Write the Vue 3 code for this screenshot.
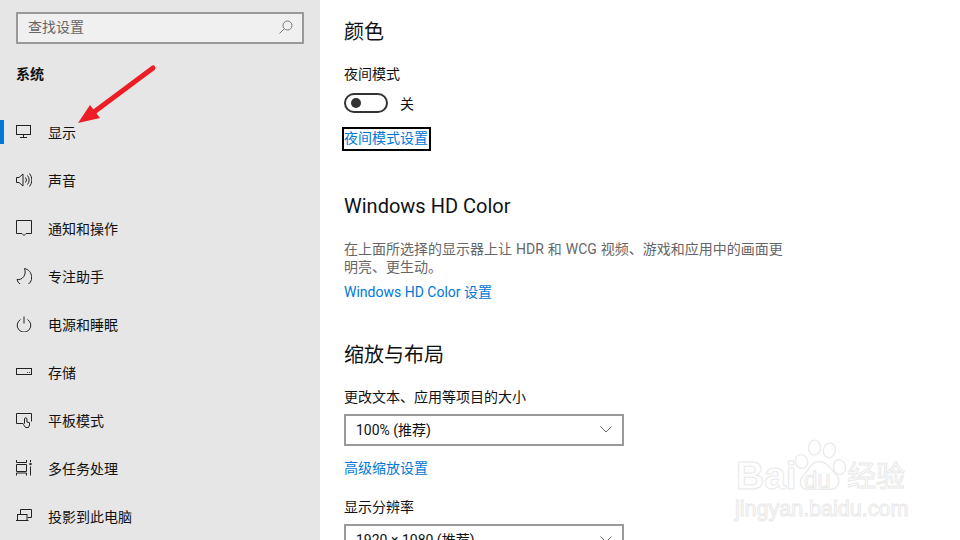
<script setup>
const items = [
  { label: '显示', icon: 'display', active: true },
  { label: '声音', icon: 'sound' },
  { label: '通知和操作', icon: 'note' },
  { label: '专注助手', icon: 'moon' },
  { label: '电源和睡眠', icon: 'power' },
  { label: '存储', icon: 'storage' },
  { label: '平板模式', icon: 'tablet' },
  { label: '多任务处理', icon: 'multi' },
  { label: '投影到此电脑', icon: 'project' }
]
</script>

<template>
  <div class="page">
    <aside class="side">
      <div class="search">
        <span class="search-text">查找设置</span>
        <svg class="search-icon" width="16" height="16" viewBox="0 0 16 16" fill="none" stroke="#777" stroke-width="1">
          <circle cx="9.5" cy="6.5" r="4.5" />
          <path d="M6.2 9.8 1.5 14.5" />
        </svg>
      </div>
      <div class="sys">系统</div>
      <nav class="nav">
        <div v-for="it in items" :key="it.label" class="item" :class="{ active: it.active }">
          <svg class="ico" width="16" height="16" viewBox="0 0 16 16" fill="none" stroke="#222" stroke-width="1">
            <template v-if="it.icon === 'display'">
              <rect x="0.5" y="1.5" width="14" height="9" />
              <path d="M7.500 10.500v3M4 13.500h7" />
            </template>
            <template v-else-if="it.icon === 'sound'">
              <path d="M0.500 5.500h2.500L7 2v12L3 10.500H0.500z" />
              <path d="M9.500 5.500a4 4 0 0 1 0 5M11.500 3.500a7 7 0 0 1 0 9M13.500 1.500a10 10 0 0 1 0 13" />
            </template>
            <template v-else-if="it.icon === 'note'">
              <path d="M0.500 0.500h15v13h-5.500L8 15.500 6 13.500H0.500z" />
            </template>
            <template v-else-if="it.icon === 'moon'">
              <path d="M8.500 0.500C13 1.500 15.500 5 15.500 8.500a7 7 0 0 1-14.500 3C6 12.500 11 7 8.500 0.500z" />
            </template>
            <template v-else-if="it.icon === 'power'">
              <path d="M8 0.500v7M4.500 3.500a6.800 6.800 0 1 0 7 0" />
            </template>
            <template v-else-if="it.icon === 'storage'">
              <rect x="0.500" y="4.500" width="15" height="6" />
              <path d="M11 8.500h.8M13 8.500h.8" />
            </template>
            <template v-else-if="it.icon === 'tablet'">
              <path d="M7 11.500H0.500v-10h15v8" />
              <path d="M8.500 11V7a1.200 1.200 0 0 1 2.400 0v3l2.600.7v2.300l-1 2.500H9.500L7.500 12.500z" />
            </template>
            <template v-else-if="it.icon === 'multi'">
              <path d="M0.500 0v2.500h10V0M0.500 15.500V13h10v2.500M0.500 4.500h10v7h-10zM14.500 6.500v9" />
              <path d="M14.500 0v2" />
              <circle cx="14.500" cy="4" r="1.200" fill="#222" stroke="none" />
            </template>
            <template v-else>
              <path d="M4.500 6V1.500h11v8h-4" />
              <rect x="1.500" y="6.500" width="9.500" height="6" />
              <path d="M0 12.500h12.500" />
            </template>
          </svg>
          <span>{{ it.label }}</span>
        </div>
      </nav>
    </aside>

    <main class="main">
      <h2 class="h first">颜色</h2>
      <div class="label night">夜间模式</div>
      <div class="toggle-row">
        <span class="toggle"><i></i></span>
        <span class="off">关</span>
      </div>
      <a class="link focus">夜间模式设置</a>

      <h2 class="h hd">Windows HD Color</h2>
      <p class="desc">在上面所选择的显示器上让 HDR 和 WCG 视频、游戏和应用中的画面更明亮、更生动。</p>
      <a class="link hd-link">Windows HD Color 设置</a>

      <h2 class="h scale">缩放与布局</h2>
      <div class="label size">更改文本、应用等项目的大小</div>
      <div class="select">
        <span>100% (推荐)</span>
        <svg width="12" height="7" viewBox="0 0 12 7" fill="none" stroke="#666"><path d="M0.500 0.500 6 6l5.500-5.500" /></svg>
      </div>
      <a class="link adv">高级缩放设置</a>
      <div class="label res">显示分辨率</div>
      <div class="select">
        <span>1920 × 1080 (推荐)</span>
        <svg width="12" height="7" viewBox="0 0 12 7" fill="none" stroke="#666"><path d="M0.500 0.500 6 6l5.500-5.500" /></svg>
      </div>
    </main>

    <svg class="arrow" width="90" height="70" viewBox="0 0 90 70">
      <path d="M83 8 24 52" stroke="#ee1c25" stroke-width="5" stroke-linecap="round" fill="none" />
      <path d="M8 63 20 45 30 58z" fill="#ee1c25" />
    </svg>

    <div class="mark">
      <svg class="paw" width="52" height="62" viewBox="0 0 56 62" fill="none" stroke="#ebebeb" stroke-width="1.500">
        <ellipse cx="7" cy="24" rx="6.500" ry="7.500" transform="rotate(-20 7 24)" />
        <ellipse cx="21" cy="9" rx="6.500" ry="8" />
        <ellipse cx="37" cy="12" rx="6.500" ry="8" transform="rotate(10 37 12)" />
        <ellipse cx="48" cy="30" rx="6.500" ry="8" transform="rotate(-10 48 30)" />
        <path d="M26 24c8 0 13 8 19 15 5 7 1 15-7 15H14C6 54 3 46 9 39c6-6 9-15 17-15z" />
      </svg>
      <span class="bai">Bai</span>
      <span class="du">du</span>
      <span class="jy">经验</span>
      <span class="url">jingyan.baidu.com</span>
    </div>
  </div>
</template>

<style scoped>
.page {
  position: relative;
  display: flex;
  width: 960px;
  height: 540px;
  overflow: hidden;
  background: #fff;
  color: #111;
  font-family: Roboto, "Noto Sans CJK SC", sans-serif;
  font-size: 14px;
}
.side {
  flex: none;
  width: 320px;
  height: 540px;
  background: #e6e6e6;
  padding-top: 12px;
  box-sizing: border-box;
}
.search {
  display: flex;
  align-items: center;
  justify-content: space-between;
  box-sizing: border-box;
  width: 288px;
  height: 32px;
  margin-left: 16px;
  padding: 0 8px 2px 10px;
  border: 2px solid #999;
  background: #f0f0f0;
  color: #666;
  line-height: 20px;
}
.sys {
  margin: 20px 0 0 16px;
  height: 20px;
  line-height: 20px;
  font-weight: 700;
}
.nav {
  margin-top: 24px;
}
.item {
  position: relative;
  display: flex;
  align-items: center;
  height: 48px;
  padding-left: 16px;
}
.item.active::before {
  content: "";
  position: absolute;
  left: 0;
  top: 12px;
  width: 4px;
  height: 24px;
  background: #0078d7;
}
.ico {
  flex: none;
  margin-right: 16px;
}
.main {
  flex: 1;
  padding: 20px 0 0 24px;
  height: 540px;
  box-sizing: border-box;
  overflow: hidden;
}
.h {
  margin: 0;
  font-size: 20px;
  font-weight: 400;
  line-height: 24px;
}
.label {
  line-height: 20px;
}
.night {
  margin-top: 20px;
}
.toggle-row {
  display: flex;
  align-items: center;
  margin-top: 8px;
  height: 22px;
}
.toggle {
  display: flex;
  align-items: center;
  box-sizing: border-box;
  width: 44px;
  height: 20px;
  padding-left: 5px;
  border: 2px solid #333;
  border-radius: 10px;
}
.toggle i {
  width: 10px;
  height: 10px;
  border-radius: 50%;
  background: #333;
}
.off {
  margin-left: 12px;
}
.link {
  display: block;
  width: max-content;
  color: #0078d7;
  line-height: 20px;
}
.focus {
  margin: 13px 0 0 -2px;
  padding-right: 1px;
  border: 2px solid #000;
  height: 24px;
  box-sizing: border-box;
  line-height: 19px;
}
.hd {
  margin-top: 43px;
}
.desc {
  margin: 22px 0 0;
  width: 440px;
  color: #666;
  font-size: 14px;
  line-height: 18px;
  word-spacing: 0.5px;
}
.hd-link {
  margin-top: 6px;
}
.scale {
  margin-top: 41px;
}
.size {
  margin-top: 20px;
}
.select {
  display: flex;
  align-items: center;
  justify-content: space-between;
  box-sizing: border-box;
  width: 280px;
  height: 32px;
  margin-top: 7px;
  padding: 0 10px 2px;
  border: 2px solid #999;
}
.adv {
  margin-top: 12px;
}
.res {
  margin-top: 19px;
}
.arrow {
  position: absolute;
  left: 70px;
  top: 60px;
}
.mark {
  position: absolute;
  left: 735px;
  top: 436px;
  width: 190px;
  height: 85px;
}
.mark span {
  position: absolute;
  color: #fff;
  -webkit-text-stroke: 1px #e9e9e9;
}
.paw {
  position: absolute;
  left: 60px;
  top: 1px;
}
.bai {
  left: 1px;
  top: 18px;
  font-size: 39px;
  line-height: 44px;
  font-weight: 700;
  font-family: "Liberation Sans", sans-serif;
}
.du {
  left: 69px;
  top: 30px;
  font-size: 24px;
  line-height: 28px;
  font-family: "Liberation Sans", sans-serif;
}
.jy {
  left: 112px;
  top: 21px;
  font-size: 29px;
  line-height: 40px;
}
.url {
  left: 0;
  top: 60px;
  font-size: 21.500px;
  line-height: 26px;
  font-family: "Liberation Sans", sans-serif;
}
</style>
